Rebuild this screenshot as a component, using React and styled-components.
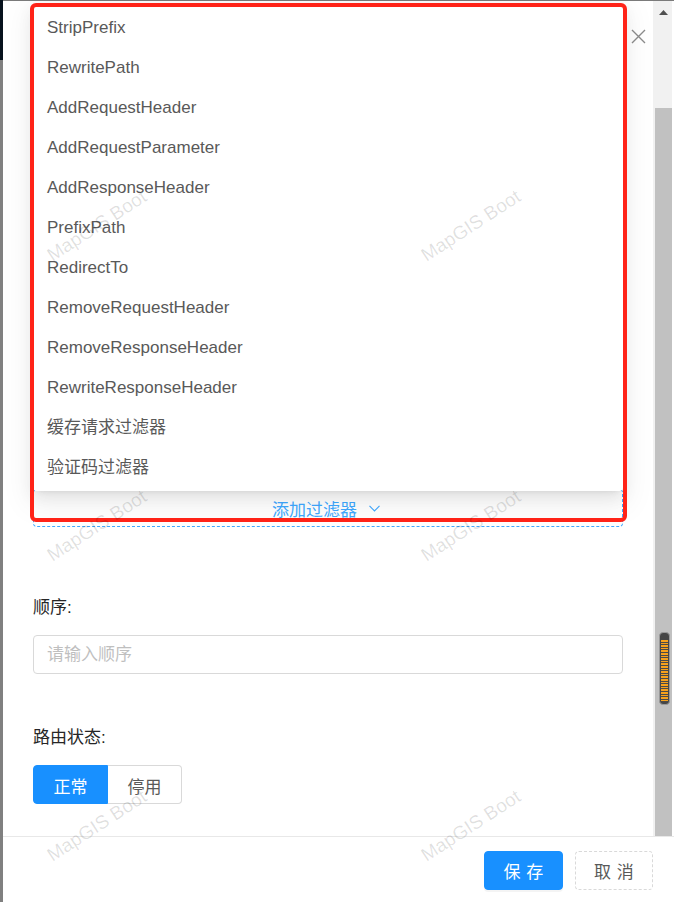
import React from "react";
import styled, { createGlobalStyle } from "styled-components";

const GlobalStyle = createGlobalStyle`
  html, body {
    margin: 0;
    padding: 0;
    background: #ffffff;
  }
  body {
    font-family: "Liberation Sans", "Noto Sans CJK SC", sans-serif;
    font-size: 17px;
  }
`;

const filters = [
  "StripPrefix",
  "RewritePath",
  "AddRequestHeader",
  "AddRequestParameter",
  "AddResponseHeader",
  "PrefixPath",
  "RedirectTo",
  "RemoveRequestHeader",
  "RemoveResponseHeader",
  "RewriteResponseHeader",
  "缓存请求过滤器",
  "验证码过滤器",
];

const Page = styled.div`
  position: relative;
  display: flex;
  width: 674px;
  height: 902px;
  overflow: hidden;
  background: #7b7b7b;
`;

const Mask = styled.div`
  display: flex;
  flex-direction: column;
  width: 3px;
  flex-shrink: 0;
  background: #808080;
`;

const MaskTop = styled.div`
  height: 60px;
  background: #07121d;
`;

const Drawer = styled.div`
  position: relative;
  flex: 1;
  display: flex;
  flex-direction: column;
  margin-top: 1px;
  background: #ffffff;
`;

const Body = styled.div`
  display: flex;
  height: 835px;
`;

const Content = styled.div`
  flex: 1;
  display: flex;
  flex-direction: column;
  padding: 0 30px;
`;

const Header = styled.div`
  display: flex;
  justify-content: flex-end;
  height: 60px;
  margin-right: -23px;
  padding-top: 28px;
  box-sizing: border-box;
`;

const CloseBtn = styled.svg`
  width: 15px;
  height: 15px;
`;

const DashedAdd = styled.div`
  display: flex;
  align-items: center;
  justify-content: center;
  gap: 12px;
  margin-top: 428px;
  height: 38px;
  box-sizing: border-box;
  border: 1px dashed #40a9ff;
  border-radius: 4px;
  color: #40a9ff;
  font-size: 17px;
  padding-right: 4px;
`;

const FormItem = styled.div`
  display: flex;
  flex-direction: column;
  margin-top: ${(p) => p.$top}px;
`;

const Label = styled.div`
  line-height: 24px;
  height: 24px;
  margin-bottom: 15px;
  color: #262626;
  font-size: 17px;
`;

const Input = styled.div`
  height: 39px;
  box-sizing: border-box;
  border: 1px solid #d9d9d9;
  border-radius: 4px;
  padding: 0 13px;
  line-height: 38px;
  color: #bfbfbf;
  font-size: 17px;
`;

const RadioGroup = styled.div`
  display: flex;
`;

const RadioBtn = styled.div`
  height: 39px;
  width: ${(p) => p.$w}px;
  box-sizing: border-box;
  display: flex;
  align-items: center;
  justify-content: center;
  padding-top: 1px;
  font-size: 17px;
  border: 1px solid ${(p) => (p.$on ? "#1890ff" : "#d9d9d9")};
  background: ${(p) => (p.$on ? "#1890ff" : "#ffffff")};
  color: ${(p) => (p.$on ? "#ffffff" : "#595959")};
  border-radius: ${(p) => (p.$on ? "4px 0 0 4px" : "0 4px 4px 0")};
  ${(p) => (!p.$on ? "border-left: none;" : "")}
`;

const ScrollTrack = styled.div`
  display: flex;
  flex-direction: column;
  width: 19px;
  margin-right: 2px;
  background: #f1f1f1;
`;

const ArrowBox = styled.div`
  height: 107px;
  display: flex;
  justify-content: center;
  padding-top: 9px;
  box-sizing: border-box;
  padding-left: 2px;
`;

const Thumb = styled.div`
  flex: 1;
  margin-left: 2px;
  background: #c1c1c1;
  padding-top: 524px;
  padding-left: 4px;
  box-sizing: border-box;
`;

const Grabber = styled.div`
  width: 11px;
  height: 73px;
  box-sizing: border-box;
  border: 1px solid #9a9a9a;
  border-radius: 4px;
  background: #464646;
  padding: 7px 1px 2px;
`;

const GrabberStripes = styled.div`
  height: 100%;
  background: repeating-linear-gradient(
    to bottom,
    #f6a21c 0 1.6px,
    #4a4a4a 1.6px 2.6px
  );
`;

const Footer = styled.div`
  flex: 1;
  display: flex;
  justify-content: flex-end;
  align-items: flex-start;
  gap: 12px;
  padding: 14px 21px 0 0;
  border-top: 1px solid #e8e8e8;
`;

const Button = styled.div`
  height: 39px;
  width: ${(p) => p.$w}px;
  box-sizing: border-box;
  display: flex;
  align-items: center;
  justify-content: center;
  border-radius: 4px;
  font-size: 17px;
  letter-spacing: 0.34em;
  text-indent: 0.34em;
  border: 1px ${(p) => (p.$primary ? "solid #1890ff" : "dashed #d9d9d9")};
  background: ${(p) => (p.$primary ? "#1890ff" : "#ffffff")};
  color: ${(p) => (p.$primary ? "#ffffff" : "#595959")};
  box-shadow: ${(p) => (p.$primary ? "0 2px 0 rgba(0,0,0,0.045)" : "none")};
`;

const Dropdown = styled.div`
  position: absolute;
  left: 30px;
  top: 2px;
  width: 590px;
  padding: 5px 0 3px;
  background: #ffffff;
  border-radius: 4px;
  box-shadow: 0 3px 6px -4px rgba(0, 0, 0, 0.12),
    0 6px 16px 0 rgba(0, 0, 0, 0.08), 0 9px 28px 8px rgba(0, 0, 0, 0.05);
`;

const Option = styled.div`
  height: 40px;
  line-height: 40px;
  padding: 0 14px;
  color: #595959;
  font-size: 17px;
`;

const Highlight = styled.div`
  position: absolute;
  left: 26.5px;
  top: 2px;
  width: 597px;
  height: 519px;
  box-sizing: border-box;
  border: 4px solid #ff2318;
  border-radius: 6px;
  pointer-events: none;
`;

const Watermarks = styled.div`
  position: absolute;
  left: 0;
  top: 76px;
  display: grid;
  grid-template-columns: 194px 180px 194px;
  grid-auto-rows: 300px;
  pointer-events: none;
`;

const Mark = styled.div`
  grid-column: ${(p) => p.$col};
  display: flex;
  align-items: center;
  justify-content: center;
  transform: rotate(-33deg);
  color: rgba(0, 0, 0, 0.12);
  font-size: 19px;
  white-space: nowrap;
`;

export default function App() {
  return (
    <>
      <GlobalStyle />
      <Page>
        <Mask>
          <MaskTop />
        </Mask>
        <Drawer>
          <Body>
            <Content>
              <Header>
                <CloseBtn viewBox="0 0 15 15">
                  <path
                    d="M1 1 L14 14 M14 1 L1 14"
                    stroke="#8c8c8c"
                    strokeWidth="1.4"
                    fill="none"
                  />
                </CloseBtn>
              </Header>
              <DashedAdd>
                <span>添加过滤器</span>
                <svg width="11" height="7" viewBox="0 0 11 7">
                  <path
                    d="M0.5 0.8 L5.5 6 L10.5 0.8"
                    stroke="#40a9ff"
                    strokeWidth="1.1"
                    fill="none"
                  />
                </svg>
              </DashedAdd>
              <FormItem $top={69}>
                <Label>顺序:</Label>
                <Input>请输入顺序</Input>
              </FormItem>
              <FormItem $top={52}>
                <Label>路由状态:</Label>
                <RadioGroup>
                  <RadioBtn $on $w={75}>正常</RadioBtn>
                  <RadioBtn $w={74}>停用</RadioBtn>
                </RadioGroup>
              </FormItem>
            </Content>
            <ScrollTrack>
              <ArrowBox>
                <svg width="9" height="5" viewBox="0 0 9 5">
                  <path d="M0 5 L4.5 0 L9 5 Z" fill="#505050" />
                </svg>
              </ArrowBox>
              <Thumb>
                <Grabber>
                  <GrabberStripes />
                </Grabber>
              </Thumb>
            </ScrollTrack>
          </Body>
          <Footer>
            <Button $primary $w={79}>保存</Button>
            <Button $w={78}>取消</Button>
          </Footer>
          <Dropdown>
            {filters.map((f) => (
              <Option key={f}>{f}</Option>
            ))}
          </Dropdown>
          <Highlight />
        </Drawer>
        <Watermarks>
          <Mark $col={1}>MapGIS Boot</Mark>
          <Mark $col={3}>MapGIS Boot</Mark>
          <Mark $col={1}>MapGIS Boot</Mark>
          <Mark $col={3}>MapGIS Boot</Mark>
          <Mark $col={1}>MapGIS Boot</Mark>
          <Mark $col={3}>MapGIS Boot</Mark>
        </Watermarks>
      </Page>
    </>
  );
}
